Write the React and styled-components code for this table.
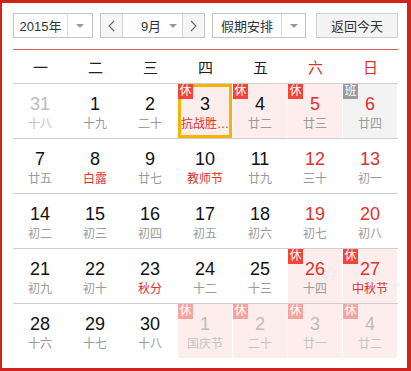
import React from "react";
import styled, { createGlobalStyle, css } from "styled-components";

const Global = createGlobalStyle`
  html, body { margin: 0; padding: 0; background: #fff; }
  body { font-family: "Liberation Sans", "Noto Sans CJK SC", sans-serif; }
  * { box-sizing: border-box; }
`;

const Frame = styled.div`
  width: 411px;
  height: 371px;
  border-style: solid;
  border-color: #d0211c;
  border-width: 3px 4px 3px 2px;
  padding: 10px 9px 0 11px;
  background: #fff;
`;

const Toolbar = styled.div`
  display: flex;
  align-items: stretch;
  height: 25px;
  font-size: 13px;
  color: #333;
`;

const Select = styled.div`
  display: flex;
  width: ${(p) => p.$w}px;
  margin-right: ${(p) => p.$mr || 0}px;
  border: 1px solid #c4c4c4;
  background: #fff;
`;

const SelectLabel = styled.div`
  flex: 1;
  display: flex;
  align-items: center;
  justify-content: center;
  padding-left: ${(p) => p.$pl || 0}px;
`;

const ArrowBox = styled.div`
  width: ${(p) => p.$w}px;
  display: flex;
  align-items: center;
  justify-content: center;
  border-left: ${(p) => (p.$divider ? "1px solid #dcdcdc" : "none")};
`;

const Caret = styled.span`
  width: 0;
  height: 0;
  border-left: 4px solid transparent;
  border-right: 4px solid transparent;
  border-top: 4px solid #999;
`;

const MonthGroup = styled.div`
  display: flex;
  width: 105px;
  margin-right: 7px;
  border: 1px solid #c4c4c4;
`;

const NavBtn = styled.div`
  width: 22px;
  display: flex;
  align-items: center;
  justify-content: center;
  background: #f6f6f6;
  ${(p) => (p.$side === "left" ? "border-right: 1px solid #d4d4d4;" : "border-left: 1px solid #d4d4d4;")}
`;

const MonthSel = styled.div`
  flex: 1;
  display: flex;
  align-items: center;
  background: #fff;
  padding-left: 10px;
  gap: 0;
`;

const MonthText = styled.span`
  width: 36px;
  text-align: center;
`;

const TodayBtn = styled.div`
  margin-left: auto;
  width: 82px;
  display: flex;
  align-items: center;
  justify-content: center;
  border: 1px solid #cfcfcf;
  background: #f4f4f4;
  color: #333;
`;

const RedLine = styled.div`
  height: 1px;
  background: #e35a55;
  margin-top: 11px;
`;

const Grid = styled.div`
  display: grid;
  grid-template-columns: repeat(7, 55px);
`;

const HeadCell = styled.div`
  height: 34px;
  border-bottom: 1px solid #cfcfcf;
  display: flex;
  align-items: center;
  justify-content: center;
  font-size: 15px;
  color: ${(p) => (p.$weekend ? "#e0302c" : "#222")};
`;

const Cell = styled.div`
  height: 55px;
  border-bottom: ${(p) => (p.$last ? "none" : "1px solid #cfcfcf")};
  padding-right: 1px;
`;

const CellInner = styled.div`
  position: relative;
  height: 54px;
  display: flex;
  flex-direction: column;
  align-items: center;
  padding-top: 10px;
  ${(p) =>
    p.$kind === "rest" &&
    css`
      background: #fdeeed;
    `}
  ${(p) =>
    p.$kind === "work" &&
    css`
      background: #f3f3f3;
    `}
  ${(p) =>
    p.$selected &&
    css`
      border: 3px solid #f8b302;
      padding-top: 7px;
    `}
`;

const Num = styled.div`
  font-size: 18px;
  line-height: 20px;
  color: ${(p) => p.$color};
`;

const Lunar = styled.div`
  margin-top: 2px;
  font-size: 12px;
  line-height: 16px;
  color: ${(p) => p.$color};
  white-space: nowrap;
`;

const Badge = styled.span`
  position: absolute;
  top: ${(p) => (p.$selected ? -3 : 0)}px;
  left: ${(p) => (p.$selected ? -3 : 0)}px;
  width: 15px;
  height: 15px;
  font-size: 12px;
  line-height: 15px;
  text-align: center;
  color: #fff;
  background: ${(p) => p.$bg};
`;

const Chevron = ({ dir }) => (
  <svg width="7" height="12" viewBox="0 0 7 12">
    <path
      d={dir === "left" ? "M6 1 L1 6 L6 11" : "M1 1 L6 6 L1 11"}
      fill="none"
      stroke="#666"
      strokeWidth="1.1"
    />
  </svg>
);

const heads = ["一", "二", "三", "四", "五", "六", "日"];

const days = [
  { d: 31, l: "十八", out: true },
  { d: 1, l: "十九" },
  { d: 2, l: "二十" },
  { d: 3, l: "抗战胜…", fest: true, rest: "休", sel: true },
  { d: 4, l: "廿二", rest: "休" },
  { d: 5, l: "廿三", rest: "休" },
  { d: 6, l: "廿四", rest: "班" },
  { d: 7, l: "廿五" },
  { d: 8, l: "白露", fest: true },
  { d: 9, l: "廿七" },
  { d: 10, l: "教师节", fest: true },
  { d: 11, l: "廿九" },
  { d: 12, l: "三十" },
  { d: 13, l: "初一" },
  { d: 14, l: "初二" },
  { d: 15, l: "初三" },
  { d: 16, l: "初四" },
  { d: 17, l: "初五" },
  { d: 18, l: "初六" },
  { d: 19, l: "初七" },
  { d: 20, l: "初八" },
  { d: 21, l: "初九" },
  { d: 22, l: "初十" },
  { d: 23, l: "秋分", fest: true },
  { d: 24, l: "十二" },
  { d: 25, l: "十三" },
  { d: 26, l: "十四", rest: "休" },
  { d: 27, l: "中秋节", fest: true, rest: "休" },
  { d: 28, l: "十六" },
  { d: 29, l: "十七" },
  { d: 30, l: "十八" },
  { d: 1, l: "国庆节", out: true, rest: "休" },
  { d: 2, l: "二十", out: true, rest: "休" },
  { d: 3, l: "廿一", out: true, rest: "休" },
  { d: 4, l: "廿二", out: true, rest: "休" },
];

export default function App() {
  return (
    <>
      <Global />
      <Frame>
        <Toolbar>
          <Select $w={80} $mr={7}>
            <SelectLabel>2015年</SelectLabel>
            <ArrowBox $w={25} $divider>
              <Caret />
            </ArrowBox>
          </Select>
          <MonthGroup>
            <NavBtn $side="left">
              <Chevron dir="left" />
            </NavBtn>
            <MonthSel>
              <MonthText>9月</MonthText>
              <Caret />
            </MonthSel>
            <NavBtn $side="right">
              <Chevron dir="right" />
            </NavBtn>
          </MonthGroup>
          <Select $w={94}>
            <SelectLabel>假期安排</SelectLabel>
            <ArrowBox $w={24} $divider>
              <Caret />
            </ArrowBox>
          </Select>
          <TodayBtn>返回今天</TodayBtn>
        </Toolbar>
        <RedLine />
        <Grid>
          {heads.map((h, i) => (
            <HeadCell key={h} $weekend={i >= 5}>
              {h}
            </HeadCell>
          ))}
          {days.map((c, i) => {
            const col = i % 7;
            const weekend = col >= 5;
            const numColor = c.out ? "#bcbcbc" : weekend ? "#e0302c" : "#111";
            const lunarColor = c.out ? "#c4c4c4" : c.fest ? "#e0302c" : "#9a9a9a";
            const kind = c.rest === "休" ? "rest" : c.rest === "班" ? "work" : "none";
            const badgeBg =
              c.rest === "班" ? "#9b9b9b" : c.out ? "#f7a4a0" : "#f3443b";
            return (
              <Cell key={i} $last={i >= 28}>
                <CellInner $kind={kind} $selected={c.sel}>
                  {c.rest && (
                    <Badge $bg={badgeBg} $selected={c.sel}>
                      {c.rest}
                    </Badge>
                  )}
                  <Num $color={numColor}>{c.d}</Num>
                  <Lunar $color={lunarColor}>{c.l}</Lunar>
                </CellInner>
              </Cell>
            );
          })}
        </Grid>
      </Frame>
    </>
  );
}
